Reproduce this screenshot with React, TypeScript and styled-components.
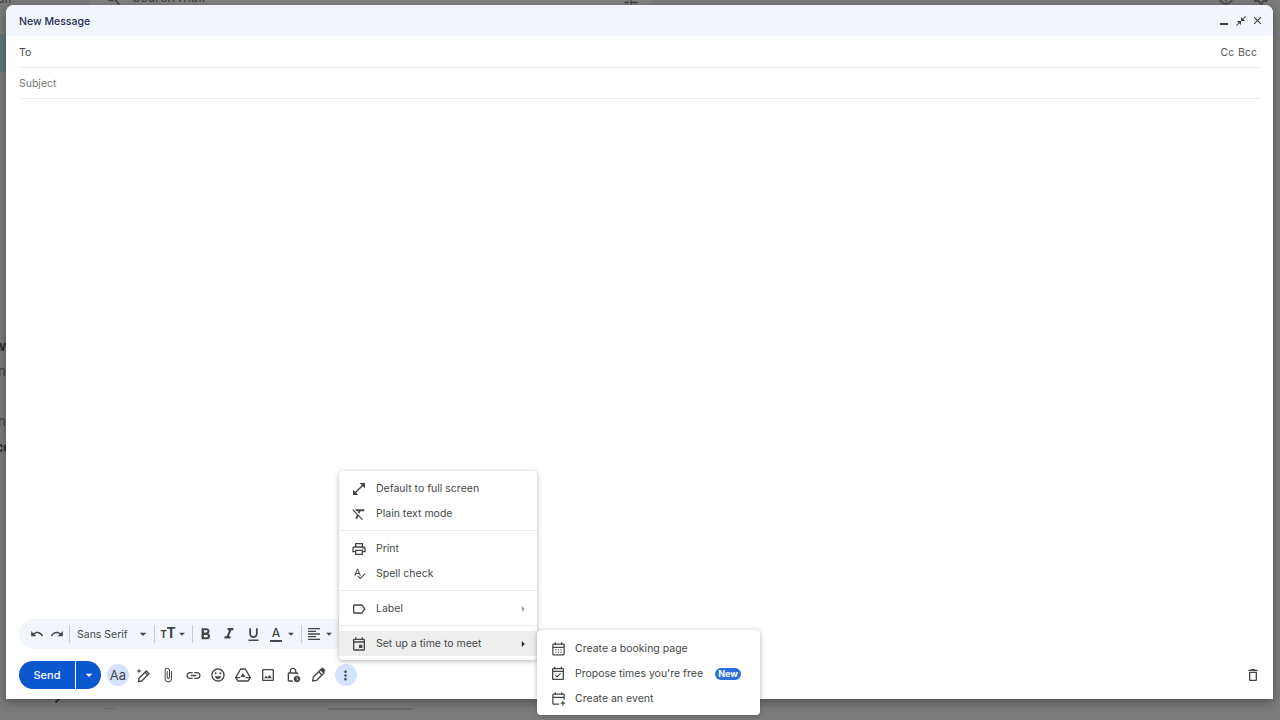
import * as React from "react";
import styled, { createGlobalStyle } from "styled-components";
import {
  MdUndo,
  MdRedo,
  MdFormatBold,
  MdFormatItalic,
  MdFormatUnderlined,
  MdFormatAlignLeft,
  MdArrowDropDown,
  MdArrowRight,
  MdAttachFile,
  MdLink,
  MdOutlineEmojiEmotions,
  MdOutlineImage,
  MdOutlineLockClock,
  MdMoreVert,
  MdOutlineDelete,
  MdClose,
  MdOpenInFull,
  MdCloseFullscreen,
  MdFormatClear,
  MdOutlinePrint,
  MdOutlineSpellcheck,
  MdOutlineLabel,
  MdOutlineEvent,
  MdOutlineEventAvailable,
  MdSearch,
  MdTune,
  MdHelpOutline,
  MdOutlineSettings,
} from "react-icons/md";

const GlobalStyle = createGlobalStyle`
  html, body {
    margin: 0;
    height: 100%;
    overflow: hidden;
  }
  body {
    font-family: "Inter", "Liberation Sans", sans-serif;
    color: #444746;
  }
`;

const Page = styled.div`
  position: relative;
  width: 1280px;
  height: 720px;
  background: #7a7a7b;
  overflow: hidden;
`;

// whatever of the mailbox still shows around the dialog
const Behind = styled.div<{ $x: number; $y: number; $bold?: boolean }>`
  position: absolute;
  left: ${(p) => p.$x}px;
  top: ${(p) => p.$y}px;
  display: flex;
  color: ${(p) => (p.$bold ? "#2e2e2e" : "#454545")};
  font-family: "Roboto", sans-serif;
  font-size: 14px;
  font-weight: ${(p) => (p.$bold ? 700 : 400)};
  line-height: 16px;
  white-space: nowrap;
`;

const SearchStrip = styled.div`
  position: absolute;
  left: 89px;
  top: 0;
  width: 563px;
  height: 6px;
  background: #818182;
`;

const AvatarEdge = styled.div`
  position: absolute;
  left: 0;
  top: 34px;
  width: 8px;
  height: 38px;
  background: #627479;
`;

const Rule = styled.div<{ $x: number; $w: number; $thick?: boolean }>`
  position: absolute;
  left: ${(p) => p.$x}px;
  top: 708px;
  width: ${(p) => p.$w}px;
  height: ${(p) => (p.$thick ? 2 : 1)}px;
  background: #696969;
`;

const Dialog = styled.div`
  position: absolute;
  left: 6px;
  top: 5px;
  width: 1267px;
  height: 694px;
  display: flex;
  flex-direction: column;
  background: #fff;
  border-radius: 8px 8px 0 0;
  box-shadow: 0 3px 10px rgba(0, 0, 0, 0.35);
`;

const Header = styled.div`
  height: 31px;
  flex: none;
  display: flex;
  align-items: center;
  justify-content: space-between;
  padding: 1px 9px 0 13px;
  box-sizing: border-box;
  background: #f2f6fc;
  border-radius: 8px 8px 0 0;
`;

const Title = styled.div`
  font-size: 10.5px;
  font-weight: 500;
  color: #1f2f52;
`;

const WindowButtons = styled.div`
  display: flex;
  align-items: center;
  gap: 4px;
  margin-top: -1px;
  color: #3c4043;
`;

const MinusBar = styled.span`
  width: 8px;
  height: 2px;
  margin: 6px 3px 0 0;
  background: #3c4043;
`;

const Field = styled.div<{ $h: number; $drop?: number }>`
  height: ${(p) => p.$h}px;
  flex: none;
  margin: 0 13px 0 12px;
  padding-top: ${(p) => p.$drop ?? 0}px;
  box-sizing: content-box;
  display: flex;
  align-items: center;
  justify-content: space-between;
  border-bottom: 1px solid #eceff1;
  font-size: 10.5px;
`;

const FieldLabel = styled.span<{ $muted?: boolean }>`
  margin-left: 1px;
  color: ${(p) => (p.$muted ? "#757575" : "#444746")};
`;

const CopyLinks = styled.span`
  margin-right: 3px;
  color: #555;
  word-spacing: 1px;
`;

const Body = styled.div`
  flex: 1;
`;

const FormatBar = styled.div`
  height: 30px;
  width: 330px;
  flex: none;
  margin-left: 13px;
  display: flex;
  align-items: center;
  padding-left: 8px;
  box-sizing: border-box;
  background: #f2f6fc;
  border-radius: 15px;
  color: #444746;
`;

const BarButton = styled.span<{ $w: number }>`
  width: ${(p) => p.$w}px;
  flex: none;
  display: flex;
  align-items: center;
  justify-content: center;
`;

const Separator = styled.span`
  width: 1px;
  height: 18px;
  flex: none;
  background: #c7c9cc;
`;

const FontName = styled.span`
  width: 81px;
  flex: none;
  display: flex;
  align-items: center;
  justify-content: space-between;
  padding-left: 7px;
  box-sizing: border-box;
  font-size: 10.5px;
  white-space: nowrap;
`;

const SizeGlyph = styled.span`
  font-family: "Roboto", sans-serif;
  font-weight: 700;
  color: #3c4043;
  display: flex;
  align-items: baseline;
  line-height: 16px;
`;

const Small = styled.span`
  font-size: 10px;
`;

const Large = styled.span`
  font-size: 14px;
`;

const ColorA = styled.span`
  display: flex;
  flex-direction: column;
  align-items: center;
  font-size: 12px;
  font-weight: 500;
  line-height: 12px;
  color: #444746;
  &::after {
    content: "";
    width: 12px;
    height: 2px;
    margin-top: 1px;
    background: #444746;
  }
`;

const Footer = styled.div`
  height: 28px;
  flex: none;
  margin: 12px 0 10px 13px;
  display: flex;
  align-items: center;
  color: #444746;
`;

const SendGroup = styled.div`
  display: flex;
  height: 28px;
  width: 82px;
  margin-right: 6px;
  flex: none;
  background: #0b57d0;
  color: #fff;
  border-radius: 14px;
  overflow: hidden;
`;

const SendLabel = styled.span`
  width: 56px;
  display: flex;
  align-items: center;
  justify-content: center;
  font-size: 11px;
  font-weight: 500;
  border-right: 1px solid #fff;
`;

const SendArrow = styled.span`
  flex: 1;
  display: flex;
  align-items: center;
  justify-content: center;
`;

const RoundButton = styled.span<{ $gap?: number }>`
  width: 22px;
  height: 22px;
  flex: none;
  display: flex;
  align-items: center;
  justify-content: center;
  margin: 0 1.5px 0 ${(p) => p.$gap ?? 0}px;
  border-radius: 50%;
  background: #d3e3fd;
  font-size: 13px;
`;

const FooterIcon = styled.span`
  width: 25px;
  flex: none;
  display: flex;
  align-items: center;
  justify-content: center;
`;

const TrashSlot = styled.span`
  margin-left: auto;
  margin-right: 12px;
  display: flex;
`;

const Menu = styled.div<{ $x: number; $y: number; $w: number }>`
  position: absolute;
  left: ${(p) => p.$x}px;
  top: ${(p) => p.$y}px;
  width: ${(p) => p.$w}px;
  padding: 5px 0 4px;
  box-sizing: border-box;
  background: #fff;
  border-radius: 4px;
  box-shadow: 0 1px 5px rgba(60, 64, 67, 0.4);
`;

const SubMenu = styled(Menu)`
  padding: 6px 0 4px 1px;
`;

const Item = styled.div<{ $active?: boolean }>`
  height: 25px;
  display: flex;
  align-items: center;
  padding: 0 7px 0 8px;
  background: ${(p) => (p.$active ? "#eeeeee" : "transparent")};
  color: #444746;
  font-size: 10.5px;
  white-space: nowrap;
`;

const ItemIcon = styled.span`
  width: 24px;
  flex: none;
  display: flex;
  align-items: center;
  justify-content: center;
  margin-right: 5px;
`;

const Chevron = styled.span<{ $dark?: boolean }>`
  margin-left: auto;
  display: flex;
  color: ${(p) => (p.$dark ? "#202124" : "#9aa0a6")};
`;

const Divider = styled.div`
  height: 1px;
  margin: 4px 0 5px;
  background: #ebebeb;
`;

const NewBadge = styled.span`
  margin-left: 12px;
  width: 26px;
  height: 12px;
  display: flex;
  align-items: center;
  justify-content: center;
  border-radius: 6px;
  background: #2a6fdb;
  color: #fff;
  font-size: 9px;
  font-weight: 700;
`;

const DriveIcon = () => (
  <svg width="16" height="16" viewBox="0 0 24 24" fill="none" stroke="currentColor" strokeWidth="2">
    <path d="M8.5 3h7L23 16l-3.5 5h-15L1 16z" strokeLinejoin="round" />
    <path d="M12 9l3.5 6h-7z" fill="currentColor" stroke="none" />
    <path d="M1.5 16H8M16 16h6.5" />
  </svg>
);

const SparklePen = () => (
  <svg width="16" height="16" viewBox="0 0 24 24" fill="none" stroke="currentColor" strokeWidth="2">
    <path d="M5 22l1-5L17 6l4 4L10 21z" strokeLinejoin="round" />
    <path d="M15 8l4 4" />
    <path d="M6 2l1 3 3 1-3 1-1 3-1-3-3-1 3-1z" fill="currentColor" stroke="none" />
  </svg>
);

const SignaturePen = () => (
  <svg width="16" height="16" viewBox="0 0 24 24" fill="none" stroke="currentColor" strokeWidth="2">
    <path d="M4 21l1-6L16 4l5 5-11 11z" strokeLinejoin="round" />
    <path d="M13 7l5 5" />
    <path d="M16 4l3-2 3 3-2 3" fill="currentColor" />
  </svg>
);

const CalendarGrid = () => (
  <svg width="15" height="15" viewBox="0 0 24 24" fill="none" stroke="currentColor" strokeWidth="2">
    <rect x="3" y="5" width="18" height="17" rx="1" />
    <path d="M3 10h18M7 2v4M17 2v4" />
    <path d="M7 14h2M11 14h2M15 14h2M7 18h2M11 18h2M15 18h2" strokeWidth="1.6" />
  </svg>
);

const CalendarPlus = () => (
  <svg width="15" height="15" viewBox="0 0 24 24" fill="none" stroke="currentColor" strokeWidth="2">
    <path d="M13 21H4a1 1 0 0 1-1-1V6a1 1 0 0 1 1-1h16a1 1 0 0 1 1 1v8" />
    <path d="M3 10h18M7 2v4M17 2v4" />
    <path d="M19 16v7M15.5 19.5h7" />
  </svg>
);

const StrayMark = () => (
  <svg width="6" height="6" viewBox="0 0 6 6" stroke="#222" strokeWidth="1.6">
    <path d="M0.5 5.5L5 1" />
  </svg>
);

export default function App() {
  return (
    <Page>
      <GlobalStyle />
      <SearchStrip />
      <AvatarEdge />
      <Behind $x={-3} $y={-10}>all</Behind>
      <Behind $x={103} $y={-12}>
        <MdSearch size={20} />
      </Behind>
      <Behind $x={132} $y={-11}>Search mail</Behind>
      <Behind $x={622} $y={-11}>
        <MdTune size={18} />
      </Behind>
      <Behind $x={1217} $y={-12}>
        <MdHelpOutline size={18} />
      </Behind>
      <Behind $x={1252} $y={-12}>
        <MdOutlineSettings size={18} />
      </Behind>
      <Behind $x={-1} $y={338} $bold>v</Behind>
      <Behind $x={-2} $y={363}>n</Behind>
      <Behind $x={-2} $y={413}>n</Behind>
      <Behind $x={-4} $y={439} $bold>ce</Behind>
      <Behind $x={55} $y={697}>
        <StrayMark />
      </Behind>
      <Rule $x={104} $w={10} />
      <Rule $x={328} $w={84} $thick />

      <Dialog>
        <Header>
          <Title>New Message</Title>
          <WindowButtons>
            <MinusBar />
            <MdCloseFullscreen size={12} />
            <MdClose size={13} />
          </WindowButtons>
        </Header>
        <Field $h={30} $drop={1}>
          <FieldLabel>To</FieldLabel>
          <CopyLinks>Cc Bcc</CopyLinks>
        </Field>
        <Field $h={30}>
          <FieldLabel $muted>Subject</FieldLabel>
        </Field>
        <Body />
        <FormatBar>
          <BarButton $w={20}>
            <MdUndo size={14} />
          </BarButton>
          <BarButton $w={20}>
            <MdRedo size={14} />
          </BarButton>
          <BarButton $w={2} />
          <Separator />
          <FontName>
            Sans Serif
            <MdArrowDropDown size={16} />
          </FontName>
          <BarButton $w={3} />
          <Separator />
          <BarButton $w={6} />
          <BarButton $w={14}>
            <SizeGlyph>
              <Small>T</Small>
              <Large>T</Large>
            </SizeGlyph>
          </BarButton>
          <MdArrowDropDown size={14} />
          <BarButton $w={3} />
          <Separator />
          <BarButton $w={24}>
            <MdFormatBold size={19} />
          </BarButton>
          <BarButton $w={24}>
            <MdFormatItalic size={18} />
          </BarButton>
          <BarButton $w={24}>
            <MdFormatUnderlined size={17} />
          </BarButton>
          <BarButton $w={3} />
          <BarButton $w={16}>
            <ColorA>A</ColorA>
          </BarButton>
          <MdArrowDropDown size={14} />
          <BarButton $w={3} />
          <Separator />
          <BarButton $w={4} />
          <BarButton $w={16}>
            <MdFormatAlignLeft size={16} />
          </BarButton>
          <MdArrowDropDown size={14} />
        </FormatBar>
        <Footer>
          <SendGroup>
            <SendLabel>Send</SendLabel>
            <SendArrow>
              <MdArrowDropDown size={16} />
            </SendArrow>
          </SendGroup>
          <RoundButton>Aa</RoundButton>
          <FooterIcon>
            <SparklePen />
          </FooterIcon>
          <FooterIcon>
            <MdAttachFile size={16} />
          </FooterIcon>
          <FooterIcon>
            <MdLink size={17} />
          </FooterIcon>
          <FooterIcon>
            <MdOutlineEmojiEmotions size={16} />
          </FooterIcon>
          <FooterIcon>
            <DriveIcon />
          </FooterIcon>
          <FooterIcon>
            <MdOutlineImage size={16} />
          </FooterIcon>
          <FooterIcon>
            <MdOutlineLockClock size={16} />
          </FooterIcon>
          <FooterIcon>
            <SignaturePen />
          </FooterIcon>
          <RoundButton $gap={4}>
            <MdMoreVert size={15} />
          </RoundButton>
          <TrashSlot>
            <MdOutlineDelete size={16} />
          </TrashSlot>
        </Footer>
      </Dialog>

      <Menu $x={339} $y={471} $w={198}>
        <Item>
          <ItemIcon>
            <MdOpenInFull size={16} />
          </ItemIcon>
          Default to full screen
        </Item>
        <Item>
          <ItemIcon>
            <MdFormatClear size={16} />
          </ItemIcon>
          Plain text mode
        </Item>
        <Divider />
        <Item>
          <ItemIcon>
            <MdOutlinePrint size={16} />
          </ItemIcon>
          Print
        </Item>
        <Item>
          <ItemIcon>
            <MdOutlineSpellcheck size={13} />
          </ItemIcon>
          Spell check
        </Item>
        <Divider />
        <Item>
          <ItemIcon>
            <MdOutlineLabel size={16} />
          </ItemIcon>
          Label
          <Chevron>
            <MdArrowRight size={14} />
          </Chevron>
        </Item>
        <Divider />
        <Item $active>
          <ItemIcon>
            <MdOutlineEvent size={16} />
          </ItemIcon>
          Set up a time to meet
          <Chevron $dark>
            <MdArrowRight size={14} />
          </Chevron>
        </Item>
      </Menu>

      <SubMenu $x={537} $y={630} $w={223}>
        <Item>
          <ItemIcon>
            <CalendarGrid />
          </ItemIcon>
          Create a booking page
        </Item>
        <Item>
          <ItemIcon>
            <MdOutlineEventAvailable size={16} />
          </ItemIcon>
          Propose times you're free
          <NewBadge>New</NewBadge>
        </Item>
        <Item>
          <ItemIcon>
            <CalendarPlus />
          </ItemIcon>
          Create an event
        </Item>
      </SubMenu>
    </Page>
  );
}
